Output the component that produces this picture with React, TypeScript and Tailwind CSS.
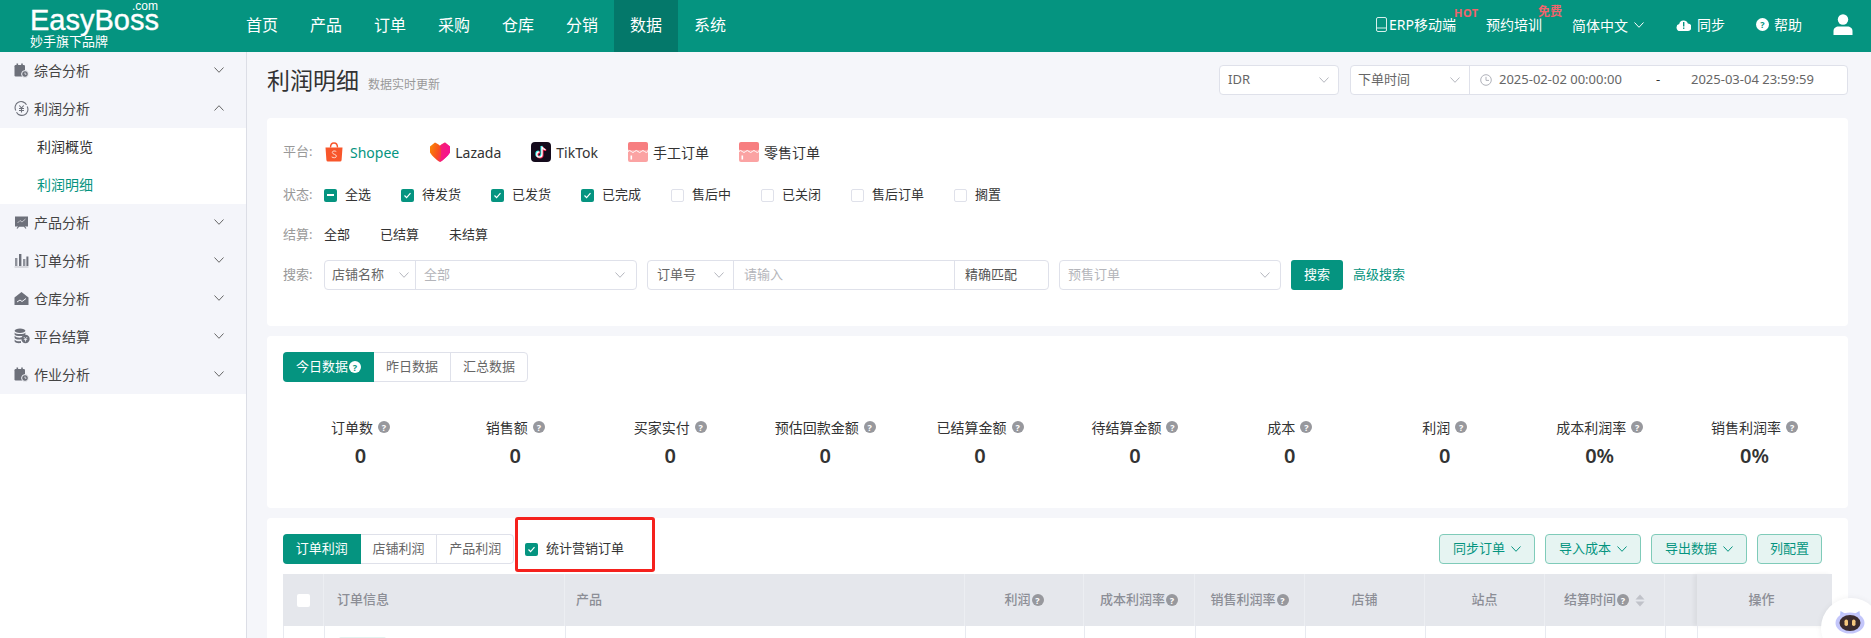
import { useState } from "react";

const NAV = ["首页", "产品", "订单", "采购", "仓库", "分销", "数据", "系统"];
const ETATS = [
  { label: "待发货", coche: true },
  { label: "已发货", coche: true },
  { label: "已完成", coche: true },
  { label: "售后中", coche: false },
  { label: "已关闭", coche: false },
  { label: "售后订单", coche: false },
  { label: "搁置", coche: false },
];
const STATS = [
  { label: "订单数", valeur: "0" },
  { label: "销售额", valeur: "0" },
  { label: "买家实付", valeur: "0" },
  { label: "预估回款金额", valeur: "0" },
  { label: "已结算金额", valeur: "0" },
  { label: "待结算金额", valeur: "0" },
  { label: "成本", valeur: "0" },
  { label: "利润", valeur: "0" },
  { label: "成本利润率", valeur: "0%" },
  { label: "销售利润率", valeur: "0%" },
];
const COLONNES = "grid-cols-[41px_241px_400px_119px_111px_110px_120px_120px_120px_32px_135px]";

function Chev({ className = "", up = false }: { className?: string; up?: boolean }) {
  return (
    <svg width="10" height="6" viewBox="0 0 10 6" fill="none" stroke="currentColor" strokeWidth="1" className={`shrink-0 ${className}`}>
      <polyline points={up ? "0.5,5.5 5,0.7 9.5,5.5" : "0.5,0.5 5,5.3 9.5,0.5"} />
    </svg>
  );
}

function Aide({ className = "bg-[#97989d] text-white" }: { className?: string }) {
  return (
    <span className={`inline-flex w-[12px] h-[12px] shrink-0 rounded-full items-center justify-center text-[9px] leading-none font-bold ${className}`}>?</span>
  );
}

function Case({ etat }: { etat: "coche" | "vide" | "partiel" }) {
  if (etat === "vide") return <span className="w-[13px] h-[13px] shrink-0 rounded-[2px] bg-white border border-[#dfe1ea]" />;
  return (
    <span className="w-[13px] h-[13px] shrink-0 rounded-[2px] bg-[#059480] flex items-center justify-center">
      {etat === "coche" ? (
        <svg width="9" height="9" viewBox="0 0 9 9" fill="none" stroke="white" strokeWidth="1.2">
          <polyline points="1.5,4.5 3.6,6.6 7.5,2.2" />
        </svg>
      ) : (
        <span className="w-[7px] h-[2px] bg-white" />
      )}
    </span>
  );
}

function IconeCalendrier() {
  return (
    <svg width="15" height="15" viewBox="0 0 15 15" fill="#6d707a">
      <rect x="0.5" y="2" width="10.5" height="11.5" rx="1.2" />
      <rect x="2.5" y="0.5" width="1.6" height="3" />
      <rect x="7.2" y="0.5" width="1.6" height="3" />
      <circle cx="11" cy="11" r="3.4" stroke="#f4f5fa" strokeWidth="1" />
      <path d="M11 9.5V11.2H12.4" stroke="#f4f5fa" strokeWidth="0.8" fill="none" />
    </svg>
  );
}

function IconeMenu({ type }: { type: string }) {
  if (type === "profit")
    return (
      <svg width="15" height="15" viewBox="0 0 15 15" fill="none" stroke="#6d707a" strokeWidth="1.1">
        <path d="M1.8 9.5A6 6 0 0 1 12.5 3.8M13.2 5.5A6 6 0 0 1 2.5 11.2" />
        <path d="M5.3 4.5L7.5 7L9.7 4.5M5 7.5H10M5 9.5H10M7.5 7V11.5" />
      </svg>
    );
  if (type === "produit")
    return (
      <svg width="15" height="15" viewBox="0 0 15 15">
        <rect x="1" y="1.5" width="13" height="10" fill="#6d707a" />
        <path d="M3 13.5L5 11H10L12 13.5" stroke="#6d707a" strokeWidth="1.2" fill="none" />
        <polyline points="3.5,8 6,5.5 8,7 11.5,4" stroke="#c9cad0" strokeWidth="0.9" fill="none" />
      </svg>
    );
  if (type === "barres")
    return (
      <svg width="15" height="15" viewBox="0 0 15 15" fill="#6d707a">
        <rect x="1" y="5" width="2.4" height="8" fill="#8f929b" />
        <rect x="5" y="1" width="2.4" height="12" />
        <rect x="9" y="6" width="2.4" height="7" fill="#8f929b" />
        <rect x="12.4" y="3.5" width="2" height="9.5" />
        <rect x="0.5" y="13.4" width="14" height="1.2" fill="#c4c6cc" />
      </svg>
    );
  if (type === "depot")
    return (
      <svg width="15" height="15" viewBox="0 0 15 15">
        <path d="M7.5 1L14.5 6.5V14H0.5V6.5Z" fill="#6d707a" />
        <polyline points="3,11 6,9 8,10.5 12,7.5" stroke="#f4f5fa" strokeWidth="1" fill="none" />
      </svg>
    );
  if (type === "pieces")
    return (
      <svg width="16" height="16" viewBox="0 0 16 16" fill="#6d707a">
        <ellipse cx="6" cy="2.8" rx="5.4" ry="2.2" />
        <path d="M0.6 4.4C1.5 6.6 10.5 6.6 11.4 4.4V6.4C10.5 8.4 1.5 8.4 0.6 6.4Z" />
        <path d="M0.6 7.8C1.5 10 8 10 8 9V11C5 12 1.5 11.6 0.6 10Z" />
        <path d="M0.6 11.4C1.5 13.4 6 13.4 7 13V15C4 15.4 1.5 15 0.6 13.6Z" />
        <circle cx="11.5" cy="11" r="4.2" />
        <path d="M9.8 9L11.5 11L13.2 9M9.8 11.6H13.2M11.5 11V13.6" stroke="#f4f5fa" strokeWidth="0.8" fill="none" />
      </svg>
    );
  return <IconeCalendrier />;
}

function Shopee() {
  return (
    <svg width="18" height="20" viewBox="0 0 18 20" className="mr-[2px]">
      <path d="M5.5 5.5C5.5 2.8 7 1 9 1S12.5 2.8 12.5 5.5" fill="none" stroke="#f8562b" strokeWidth="1.4" />
      <path d="M0.5 5.5H17.5L16.6 18A1.6 1.6 0 0 1 15 19.5H3A1.6 1.6 0 0 1 1.4 18Z" fill="#f8562b" />
      <path d="M11.3 9.6C10.2 8.6 7.3 8.6 7.3 10.5C7.3 12.6 11.4 11.9 11.4 14.2C11.4 16 8.2 16.2 6.7 14.9" fill="none" stroke="#ffd9cb" strokeWidth="1" />
    </svg>
  );
}

function Lazada() {
  return (
    <svg width="20" height="20" viewBox="0 0 20 20">
      <defs>
        <linearGradient id="lazada" x1="0" y1="0" x2="1" y2="0.3">
          <stop offset="0" stopColor="#fb8c00" />
          <stop offset="0.5" stopColor="#f8501f" />
          <stop offset="1" stopColor="#f5118f" />
        </linearGradient>
      </defs>
      <path d="M0 4.5L5 0.5C7 1.2 8.5 2.5 10 3.8C11.5 2.5 13 1.2 15 0.5L20 4.5V10.5C18 14 13.5 18 10 20C6.5 18 2 14 0 10.5Z" fill="url(#lazada)" />
      <path d="M10 3.8C11.5 2.5 13 1.2 15 0.5L20 4.5V10.5C18 14 13.5 18 10 20C11.5 14 11.5 9 10 3.8Z" fill="#f5118f" opacity="0.75" />
    </svg>
  );
}

function Tiktok() {
  return (
    <svg width="20" height="20" viewBox="0 0 20 20">
      <rect width="20" height="20" rx="4" fill="#140b1c" />
      <path d="M11 4.5V12.5A2.6 2.6 0 1 1 8.4 9.9M11 4.5C11.3 6.3 12.6 7.4 14.5 7.6" fill="none" stroke="#25f4ee" strokeWidth="1.7" transform="translate(-0.7 -0.5)" />
      <path d="M11 4.5V12.5A2.6 2.6 0 1 1 8.4 9.9M11 4.5C11.3 6.3 12.6 7.4 14.5 7.6" fill="none" stroke="#fe2c55" strokeWidth="1.7" transform="translate(0.7 0.5)" />
      <path d="M11 4.5V12.5A2.6 2.6 0 1 1 8.4 9.9M11 4.5C11.3 6.3 12.6 7.4 14.5 7.6" fill="none" stroke="white" strokeWidth="1.3" />
    </svg>
  );
}

function Commande() {
  return (
    <svg width="20" height="20" viewBox="0 0 20 20">
      <rect width="20" height="9" y="0" rx="2" fill="#f77e80" />
      <rect width="20" height="12" y="8" rx="2" fill="#fba3a3" />
      <path d="M0 9.5Q1.7 7.5 3.3 9.5T6.6 9.5T10 9.5T13.3 9.5T16.6 9.5T20 9.5" fill="none" stroke="white" strokeWidth="1" />
      <rect x="2.5" y="13.5" width="1.6" height="4" fill="white" />
    </svg>
  );
}

function BoutonVert({ label, chevron = true, largeur }: { label: string; chevron?: boolean; largeur: string }) {
  return (
    <div className={`h-[30px] rounded-[4px] border border-[#7fcbb9] bg-[#e6f4f2] text-[#059480] text-[13px] flex items-center justify-center gap-[6px] ${largeur}`}>
      {label}
      {chevron && <Chev />}
    </div>
  );
}

export default function App() {
  const [onglet] = useState(0);

  return (
    <div className="relative w-[1871px] h-[638px] overflow-hidden bg-[#f5f6fa] text-[#333] font-['Noto_Sans','Noto_Sans_CJK_SC',sans-serif]">
      <header className="h-[52px] bg-[#059480] text-white flex items-stretch">
        <div className="relative w-[230px] pl-[30px] shrink-0">
          <div className="font-['Liberation_Sans',sans-serif] text-[29px] leading-[20px] pt-[10px] [-webkit-text-stroke:0.4px_white]">EasyBoss</div>
          <span className="absolute left-[132px] top-[1px] font-['Liberation_Sans',sans-serif] text-[12px] leading-[10px]">.com</span>
          <div className="text-[13px] leading-[16px] mt-[3px]">妙手旗下品牌</div>
        </div>
        {NAV.map((n) => (
          <div key={n} className={`w-[64px] flex items-center justify-center text-[16px] pb-[2px] ${n === "数据" ? "bg-[#04786a]" : ""}`}>
            {n}
          </div>
        ))}
        <div className="ml-auto flex items-center text-[14px] pr-[18px] pb-[3px]">
          <svg width="11" height="15" viewBox="0 0 11 15" fill="none" stroke="#d7f0ec" strokeWidth="1" className="mr-[2px]">
            <rect x="0.5" y="0.5" width="10" height="14" rx="1.5" />
            <line x1="0.5" y1="11" x2="10.5" y2="11" />
          </svg>
          <span className="relative mr-[30px]">
            ERP移动端
            <span className="absolute left-[65px] -top-[7px] text-[11px] leading-[12px] font-bold text-[#f0646c] tracking-[0.5px]">HOT</span>
          </span>
          <span className="relative mr-[30px]">
            预约培训
            <span className="absolute left-[52px] -top-[9px] text-[12px] leading-[14px] font-bold text-[#f0646c] whitespace-nowrap">免费</span>
          </span>
          <span className="mr-[6px] mt-[1px]">简体中文</span>
          <Chev className="mr-[32px]" />
          <svg width="15" height="12" viewBox="0 0 15 12" className="mr-[6px]">
            <path d="M4 12A3.5 3.5 0 0 1 3.2 5.1A4.5 4.5 0 0 1 11.8 4.4A3.8 3.8 0 0 1 11.5 12Z" fill="white" />
            <rect x="7" y="3" width="1.4" height="4.5" fill="#059480" />
            <rect x="7" y="8.5" width="1.4" height="1.4" fill="#059480" />
          </svg>
          <span className="mr-[31px]">同步</span>
          <Aide className="bg-white text-[#059480] w-[13px] h-[13px] mr-[5px]" />
          <span className="mr-[31px]">帮助</span>
          <svg width="20" height="21" viewBox="0 0 20 21" fill="white">
            <circle cx="10" cy="5.5" r="5.2" />
            <path d="M0.5 21V17C0.5 14 3 12.5 5.5 12.5H14.5C17 12.5 19.5 14 19.5 17V21Z" />
          </svg>
        </div>
      </header>

      <div className="flex h-[586px]">
        <aside className="w-[247px] shrink-0 bg-white border-r border-[#dcdee6]">
          <MenuParent icone="calendrier" label="综合分析" />
          <MenuParent icone="profit" label="利润分析" ouvert />
          <div className="h-[38px] pl-[37px] pb-[2px] flex items-center text-[14px]">利润概览</div>
          <div className="h-[38px] pl-[37px] pb-[2px] flex items-center text-[14px] text-[#059480]">利润明细</div>
          <MenuParent icone="produit" label="产品分析" />
          <MenuParent icone="barres" label="订单分析" />
          <MenuParent icone="depot" label="仓库分析" />
          <MenuParent icone="pieces" label="平台结算" />
          <MenuParent icone="calendrier" label="作业分析" />
        </aside>

        <main className="w-[1601px] pl-[20px] pt-[13px]">
          <div className="flex items-center h-[30px] mb-[23px]">
            <h1 className="text-[23px] leading-[30px] font-normal">利润明细</h1>
            <span className="ml-[9px] mt-[10px] text-[12px] text-[#999]">数据实时更新</span>
            <div className="ml-auto flex items-center">
              <div className="w-[120px] h-[30px] bg-white rounded-[4px] border border-[#dfe1ea] flex items-center justify-between pl-[8px] pr-[9px] text-[13px] text-[#666]">
                IDR
                <Chev className="text-[#b5b7bf]" />
              </div>
              <div className="ml-[11px] w-[498px] h-[30px] bg-white rounded-[4px] border border-[#dfe1ea] flex items-center text-[13px] text-[#666]">
                <div className="w-[119px] h-full shrink-0 flex items-center justify-between pl-[7px] pr-[9px] border-r border-[#dfe1ea]">
                  下单时间
                  <Chev className="text-[#b5b7bf]" />
                </div>
                <svg width="12" height="12" viewBox="0 0 12 12" fill="none" stroke="#b0b2ba" strokeWidth="1" className="ml-[10px] shrink-0">
                  <circle cx="6" cy="6" r="5.3" />
                  <polyline points="6,2.8 6,6.4 9,6.4" />
                </svg>
                <span className="ml-[7px] w-[131px] whitespace-nowrap">2025-02-02 00:00:00</span>
                <span className="w-[56px] text-center text-[#333]">-</span>
                <span className="ml-[5px] whitespace-nowrap">2025-03-04 23:59:59</span>
              </div>
            </div>
          </div>

          <section className="w-[1581px] h-[208px] bg-white rounded-[4px] px-[16px] pt-[24px] text-[13px]">
            <div className="flex items-center h-[20px] text-[14px]">
              <span className="w-[42px] text-[13px] text-[#999]">平台:</span>
              <span className="flex items-center gap-[5px] mr-[31px] text-[#059480]"><span className="flex w-[20px]"><Shopee /></span>Shopee</span>
              <span className="flex items-center gap-[5px] mr-[30px]"><Lazada />Lazada</span>
              <span className="flex items-center gap-[5px] mr-[30px]"><Tiktok />TikTok</span>
              <span className="flex items-center gap-[5px] mr-[30px]"><Commande />手工订单</span>
              <span className="flex items-center gap-[5px]"><Commande />零售订单</span>
            </div>
            <div className="flex items-center h-[20px] mt-[23px]">
              <span className="w-[41px] text-[#999]">状态:</span>
              <span className="flex items-center gap-[8px] mr-[30px]"><Case etat="partiel" />全选</span>
              {ETATS.map((e) => (
                <span key={e.label} className="flex items-center gap-[8px] mr-[30px]">
                  <Case etat={e.coche ? "coche" : "vide"} />
                  {e.label}
                </span>
              ))}
            </div>
            <div className="flex items-center h-[20px] mt-[20px]">
              <span className="w-[41px] text-[#999]">结算:</span>
              <span className="mr-[30px]">全部</span>
              <span className="mr-[30px]">已结算</span>
              <span>未结算</span>
            </div>
            <div className="flex items-center h-[30px] mt-[15px]">
              <span className="w-[41px] text-[#999]">搜索:</span>
              <div className="w-[313px] h-full rounded-[4px] border border-[#dfe1ea] flex items-center">
                <div className="w-[91px] h-full shrink-0 flex items-center justify-between pl-[7px] pr-[6px] border-r border-[#dfe1ea] text-[#666]">
                  店铺名称
                  <Chev className="text-[#b5b7bf]" />
                </div>
                <div className="flex-1 flex items-center justify-between pl-[8px] pr-[11px] text-[#b4b5ba]">
                  全部
                  <Chev className="text-[#b5b7bf]" />
                </div>
              </div>
              <div className="ml-[10px] w-[402px] h-full rounded-[4px] border border-[#dfe1ea] flex items-center">
                <div className="w-[86px] h-full shrink-0 flex items-center justify-between pl-[9px] pr-[9px] border-r border-[#dfe1ea] text-[#666]">
                  订单号
                  <Chev className="text-[#b5b7bf]" />
                </div>
                <div className="flex-1 pl-[10px] text-[#b4b5ba]">请输入</div>
                <div className="w-[94px] h-full shrink-0 flex items-center pl-[10px] border-l border-[#dfe1ea] text-[#555]">精确匹配</div>
              </div>
              <div className="ml-[10px] w-[222px] h-full rounded-[4px] border border-[#dfe1ea] flex items-center justify-between pl-[8px] pr-[10px] text-[#b4b5ba]">
                预售订单
                <Chev className="text-[#b5b7bf]" />
              </div>
              <div className="ml-[10px] w-[52px] h-full rounded-[3px] bg-[#059480] text-white flex items-center justify-center">搜索</div>
              <span className="ml-[10px] text-[#059480]">高级搜索</span>
            </div>
          </section>

          <section className="w-[1581px] h-[172px] mt-[10px] bg-white rounded-[4px] px-[16px] pt-[16px] text-[13px]">
            <div className="flex h-[30px] w-[245px] rounded-[4px] border border-[#dfe1ea] text-[#666]">
              <div className={`w-[91px] -m-px h-[30px] rounded-l-[4px] flex items-center justify-center gap-[1px] ${onglet === 0 ? "bg-[#059480] text-white" : ""}`}>
                今日数据
                <Aide className="bg-white text-[#059480]" />
              </div>
              <div className="w-[77px] ml-px flex items-center justify-center border-r border-[#dfe1ea]">昨日数据</div>
              <div className="w-[76px] flex items-center justify-center">汇总数据</div>
            </div>
            <div className="grid grid-cols-10 mt-[35px]">
              {STATS.map((s) => (
                <div key={s.label} className="flex flex-col items-center">
                  <div className="h-[20px] flex items-center gap-[5px] text-[14px]">
                    {s.label}
                    <Aide />
                  </div>
                  <div className="h-[28px] mt-[5px] text-[20px] leading-[28px] font-semibold">{s.valeur}</div>
                </div>
              ))}
            </div>
          </section>

          <section className="relative w-[1581px] h-[200px] mt-[10px] bg-white rounded-[4px] px-[16px] pt-[16px] text-[13px]">
            <div className="flex items-center h-[30px]">
              <div className="flex h-[30px] w-[231px] rounded-[4px] border border-[#dfe1ea] text-[#666]">
                <div className="w-[78px] -m-px h-[30px] rounded-l-[4px] bg-[#059480] text-white flex items-center justify-center">订单利润</div>
                <div className="w-[77px] ml-px flex items-center justify-center border-r border-[#dfe1ea]">店铺利润</div>
                <div className="w-[76px] flex items-center justify-center">产品利润</div>
              </div>
              <span className="ml-[11px] flex items-center gap-[8px]">
                <Case etat="coche" />
                统计营销订单
              </span>
              <div className="ml-auto flex gap-[10px] pr-[10px]">
                <BoutonVert label="同步订单" largeur="w-[96px]" />
                <BoutonVert label="导入成本" largeur="w-[96px]" />
                <BoutonVert label="导出数据" largeur="w-[96px]" />
                <BoutonVert label="列配置" chevron={false} largeur="w-[65px]" />
              </div>
            </div>

            <div className={`grid ${COLONNES} h-[52px] mt-[10px] bg-[#e5e7ec] text-[#8c8e96] font-medium`}>
              <div className="flex items-center justify-center pl-[1px] border-r border-[#eceef2]">
                <span className="w-[13px] h-[13px] rounded-[2px] bg-white" />
              </div>
              <div className="flex items-center pl-[13px] border-r border-[#eceef2]">订单信息</div>
              <div className="flex items-center pl-[11px] border-r border-[#eceef2]">产品</div>
              <div className="flex items-center justify-center gap-[1px] border-r border-[#eceef2]">利润<Aide /></div>
              <div className="flex items-center justify-center gap-[1px] border-r border-[#eceef2]">成本利润率<Aide /></div>
              <div className="flex items-center justify-center gap-[1px] border-r border-[#eceef2]">销售利润率<Aide /></div>
              <div className="flex items-center justify-center border-r border-[#eceef2]">店铺</div>
              <div className="flex items-center justify-center border-r border-[#eceef2]">站点</div>
              <div className="flex items-center justify-center gap-[1px] border-r border-[#eceef2]">
                结算时间<Aide />
                <svg width="10" height="13" viewBox="0 0 10 13" fill="#c0c2c9" className="ml-[5px]">
                  <path d="M5 0.5L9.5 5.5H0.5Z" />
                  <path d="M5 12.5L9.5 7.5H0.5Z" />
                </svg>
              </div>
              <div />
              <div className="flex items-center justify-center pr-[6px] shadow-[-3px_0_4px_rgba(0,0,0,0.05)]">操作</div>
            </div>
            <div className={`grid ${COLONNES} h-[40px] border-l border-[#e8eaf0]`}>
              <div className="border-r border-[#e8eaf0]" />
              <div className="border-r border-[#e8eaf0] pl-[14px] pt-[11px]">
                <div className="w-[47px] h-[10px] bg-[#e3f2ef] rounded-t-[2px]" />
              </div>
              <div className="border-r border-[#e8eaf0]" />
              <div className="border-r border-[#e8eaf0]" />
              <div className="border-r border-[#e8eaf0]" />
              <div className="border-r border-[#e8eaf0]" />
              <div className="border-r border-[#e8eaf0]" />
              <div className="border-r border-[#e8eaf0]" />
              <div className="border-r border-[#e8eaf0]" />
              <div className="border-r border-[#e8eaf0]" />
              <div />
            </div>

            {/* cadre d'annotation rouge */}
            <div className="absolute left-[248px] -top-[1px] w-[140px] h-[55px] rounded-[3px] border-[3px] border-[#f5211d]" />
          </section>
        </main>
      </div>

      <div className="absolute left-[1821px] top-[598px] w-[60px] h-[60px] rounded-full bg-white shadow-[0_0_6px_rgba(0,0,0,0.06)] flex pl-[14px] pt-[12px]">
        <svg width="30" height="24" viewBox="0 0 30 24">
          <path d="M5 6L5.5 1L10 3.5H20L24.5 1L25 6Z" fill="#b9c2fb" />
          <ellipse cx="15" cy="13" rx="14.5" ry="10.5" fill="#c3c6fa" />
          <ellipse cx="15" cy="13" rx="10.5" ry="8" fill="#3b2b2e" />
          <rect x="9.5" y="9.5" width="3.5" height="6.5" rx="1.7" fill="#f5c77e" />
          <rect x="17" y="9.5" width="3.5" height="6.5" rx="1.7" fill="#f5c77e" />
        </svg>
      </div>
    </div>
  );
}

function MenuParent({ icone, label, ouvert = false }: { icone: string; label: string; ouvert?: boolean }) {
  return (
    <div className="h-[38px] bg-[#f4f5fa] pl-[14px] pr-[22px] pb-[2px] flex items-center text-[14px] text-[#444]">
      <span className="w-[20px] shrink-0 flex">
        <IconeMenu type={icone} />
      </span>
      <span className="flex-1">{label}</span>
      <Chev up={ouvert} className="text-[#666]" />
    </div>
  );
}
